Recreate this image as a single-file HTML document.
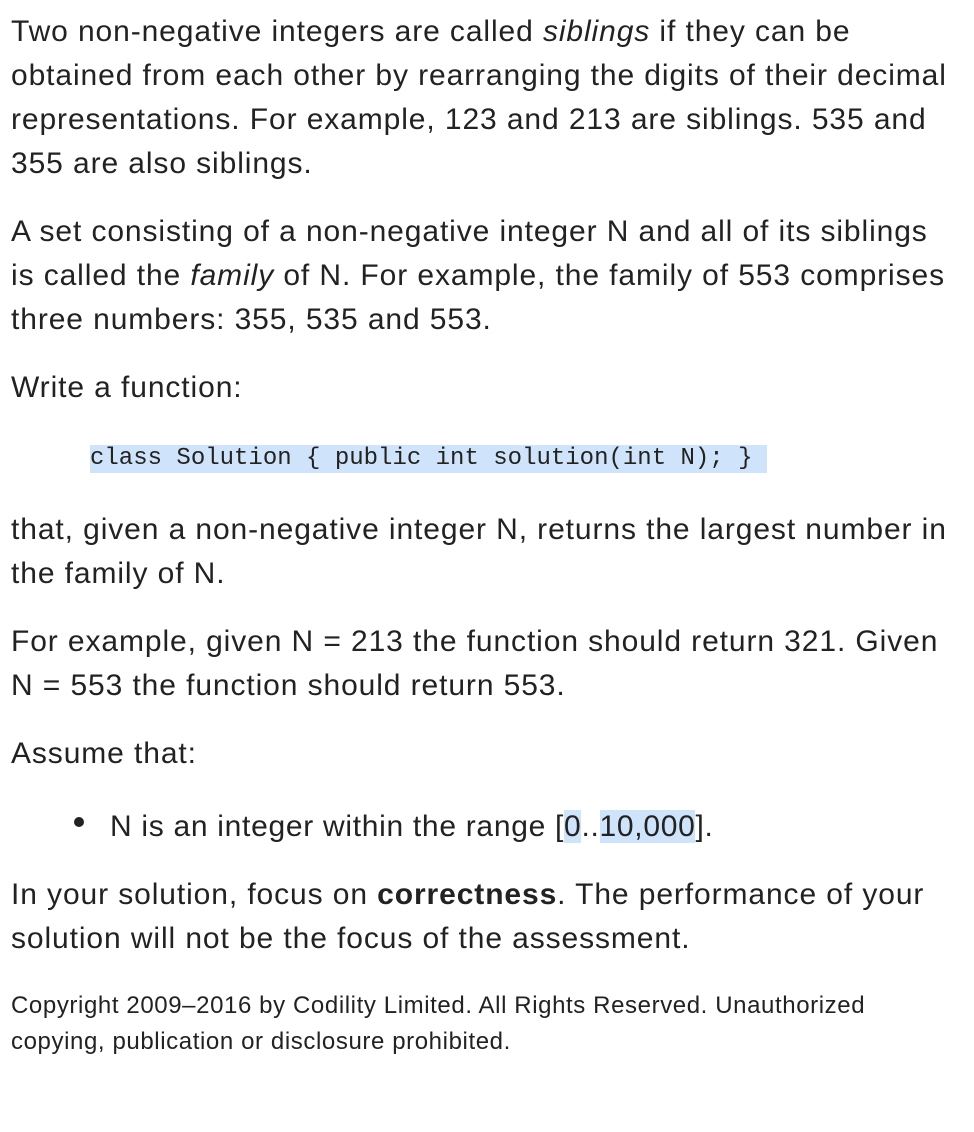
<!DOCTYPE html>
<html><head><meta charset="utf-8"><style>
html,body{margin:0;padding:0;background:#fff;width:974px;height:1132px;overflow:hidden}
body{font-family:"Liberation Sans",Arial,sans-serif;color:#222;position:relative}
.p{position:absolute;left:11px;font-size:30px;letter-spacing:0.9px;line-height:44px;white-space:nowrap;margin:0}
.code{position:absolute;left:90px;top:445px;width:677px;height:28px;background:#cfe3fb;font-family:"Liberation Mono","Courier New",monospace;font-size:24px;line-height:28px;color:#222;white-space:pre}
.hl{background:#cfe3fb}
.bul{position:absolute;left:74px;top:817px;width:10px;height:10px;border-radius:50%;background:#222}
.copy{position:absolute;left:11px;top:988px;font-size:24px;letter-spacing:0.6px;line-height:36px;white-space:nowrap}
</style></head><body>
<div class="p" style="top:10px">Two non-negative integers are called <i>siblings</i> if they can be<br>obtained from each other by rearranging the digits of their decimal<br>representations. For example, 123 and 213 are siblings. 535 and<br>355 are also siblings.</div>
<div class="p" style="top:210px">A set consisting of a non-negative integer N and all of its siblings<br>is called the <i>family</i> of N. For example, the family of 553 comprises<br>three numbers: 355, 535 and 553.</div>
<div class="p" style="top:366px">Write a function:</div>
<div class="code">class Solution { public int solution(int N); }</div>
<div class="p" style="top:508px">that, given a non-negative integer N, returns the largest number in<br>the family of N.</div>
<div class="p" style="top:620px">For example, given N = 213 the function should return 321. Given<br>N = 553 the function should return 553.</div>
<div class="p" style="top:732px">Assume that:</div>
<div class="bul"></div>
<div class="p" style="top:805px;left:110px;letter-spacing:0.7px">N is an integer within the range [<span class="hl">0</span>..<span class="hl">10,000</span>].</div>
<div class="p" style="top:873px">In your solution, focus on <b>correctness</b>. The performance of your<br>solution will not be the focus of the assessment.</div>
<div class="copy">Copyright 2009–2016 by Codility Limited. All Rights Reserved. Unauthorized<br>copying, publication or disclosure prohibited.</div>
</body></html>
